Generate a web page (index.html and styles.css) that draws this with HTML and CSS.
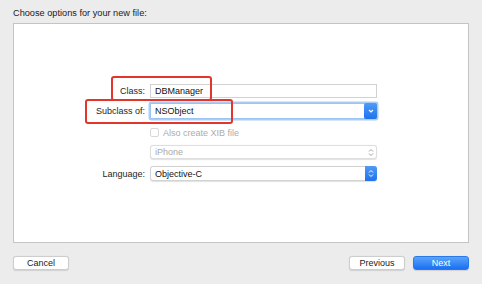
FILE: index.html
```html
<!DOCTYPE html>
<html>
<head>
<meta charset="utf-8">
<link rel="stylesheet" href="styles.css">
</head>
<body>
<div class="sheet">
  <div class="title">Choose options for your new file:</div>
  <div class="panel">
    <div class="form">
      <div class="row r-class">
        <label class="lbl">Class:</label>
        <div class="field">DBManager</div>
      </div>
      <div class="row r-sub">
        <label class="lbl">Subclass of:</label>
        <div class="field combo">NSObject
          <span class="combo-btn"><svg width="6" height="4" viewBox="0 0 6 4"><path d="M1 1 L3 3 L5 1" fill="none" stroke="#fff" stroke-width="1.1"/></svg></span>
        </div>
      </div>
      <div class="row r-check">
        <span class="lbl"></span>
        <div class="check"><span class="box"></span><span class="check-txt">Also create XIB file</span></div>
      </div>
      <div class="row r-dev">
        <span class="lbl"></span>
        <div class="field popup disabled">iPhone
          <span class="updown gray"><svg width="6" height="9" viewBox="0 0 6 9"><path d="M1 3.5 L3 1.5 L5 3.5 M1 5.5 L3 7.5 L5 5.5" fill="none" stroke="#9a9a9a" stroke-width="0.9"/></svg></span>
        </div>
      </div>
      <div class="row r-lang">
        <label class="lbl">Language:</label>
        <div class="field popup">Objective-C
          <span class="updown blue"><svg width="6" height="9" viewBox="0 0 6 9"><path d="M1 3.5 L3 1.5 L5 3.5 M1 5.5 L3 7.5 L5 5.5" fill="none" stroke="#fff" stroke-width="1"/></svg></span>
        </div>
      </div>
    </div>
    <div class="mark mark-class"></div>
    <div class="mark mark-sub"></div>
  </div>
  <div class="buttons">
    <button class="btn">Cancel</button>
    <div class="spacer"></div>
    <button class="btn">Previous</button>
    <button class="btn primary">Next</button>
  </div>
</div>
</body>
</html>
```
FILE: styles.css
```css
html, body {
  margin: 0;
  padding: 0;
  background: #ececec;
}
body {
  font-family: "Helvetica Neue", "Liberation Sans", Arial, sans-serif;
  font-size: 9px;
  color: #1a1a1a;
  width: 482px;
  height: 284px;
  overflow: hidden;
}
.sheet {
  padding: 8px 13px 0 13px;
}
.title {
  height: 15px;
  line-height: 11px;
  font-size: 9.2px;
  color: #1a1a1a;
}
.panel {
  position: relative;
  height: 220px;
  background: #fff;
  border: 1px solid #c4c4c4;
  box-sizing: border-box;
}
.form {
  padding-top: 60px;
  display: flex;
  flex-direction: column;
}
.row {
  display: flex;
  align-items: center;
}
.lbl {
  width: 131px;
  text-align: right;
  margin-right: 5px;
  color: #1e1e1e;
}
.r-class { height: 14px; }
.r-sub { height: 16px; margin-top: 5px; }
.r-check { height: 11px; margin-top: 8px; }
.r-dev { height: 14px; margin-top: 7px; }
.r-lang { height: 15px; margin-top: 7px; }
.field {
  position: relative;
  width: 227px;
  height: 100%;
  box-sizing: border-box;
  border: 1px solid #d2d2d2;
  padding-left: 4px;
  display: flex;
  align-items: center;
  color: #111;
  background: #fff;
}
.combo {
  border-color: #9cc3f2;
  box-shadow: 0 0 0 1.5px #a9cdf6;
  border-radius: 1px;
}
.combo-btn {
  position: absolute;
  right: -1px;
  top: -1px;
  bottom: -1px;
  width: 13px;
  background: linear-gradient(#4f9bf7, #1f72ec);
  border-radius: 2px;
  display: flex;
  align-items: center;
  justify-content: center;
}
.popup {
  border-radius: 3px;
  box-shadow: 0 0.5px 1px rgba(0,0,0,0.12);
}
.disabled {
  color: #a8a8a8;
  border-color: #dedede;
}
.updown {
  position: absolute;
  right: -1px;
  top: -1px;
  bottom: -1px;
  width: 12px;
  display: flex;
  align-items: center;
  justify-content: center;
  border-radius: 0 3px 3px 0;
}
.updown.blue {
  background: linear-gradient(#4f9bf7, #1f72ec);
}
.check {
  display: flex;
  align-items: center;
}
.box {
  width: 9px;
  height: 9px;
  box-sizing: border-box;
  border: 1px solid #d8d8d8;
  border-radius: 2px;
  background: #fff;
}
.check-txt {
  margin-left: 4px;
  color: #ababab;
}
.mark {
  position: absolute;
  border: 2px solid #e2352b;
  border-radius: 3px;
  box-sizing: border-box;
}
.mark-class {
  left: 97px;
  top: 52px;
  width: 101px;
  height: 25px;
}
.mark-sub {
  left: 71px;
  top: 75px;
  width: 148px;
  height: 25px;
}
.buttons {
  display: flex;
  align-items: center;
  margin-top: 13px;
}
.spacer { flex: 1; }
.btn {
  font-family: inherit;
  font-size: 9px;
  height: 14px;
  width: 56px;
  padding: 0;
  border: 1px solid #cdcdcd;
  border-radius: 3px;
  background: #fff;
  color: #1a1a1a;
  box-shadow: 0 0.5px 1px rgba(0,0,0,0.12);
  line-height: 12px;
}
.btn + .btn { margin-left: 8px; }
.primary {
  background: linear-gradient(#5aa4fa, #1b6ff2);
  border-color: #2a79ea;
  color: #fff;
}
```
